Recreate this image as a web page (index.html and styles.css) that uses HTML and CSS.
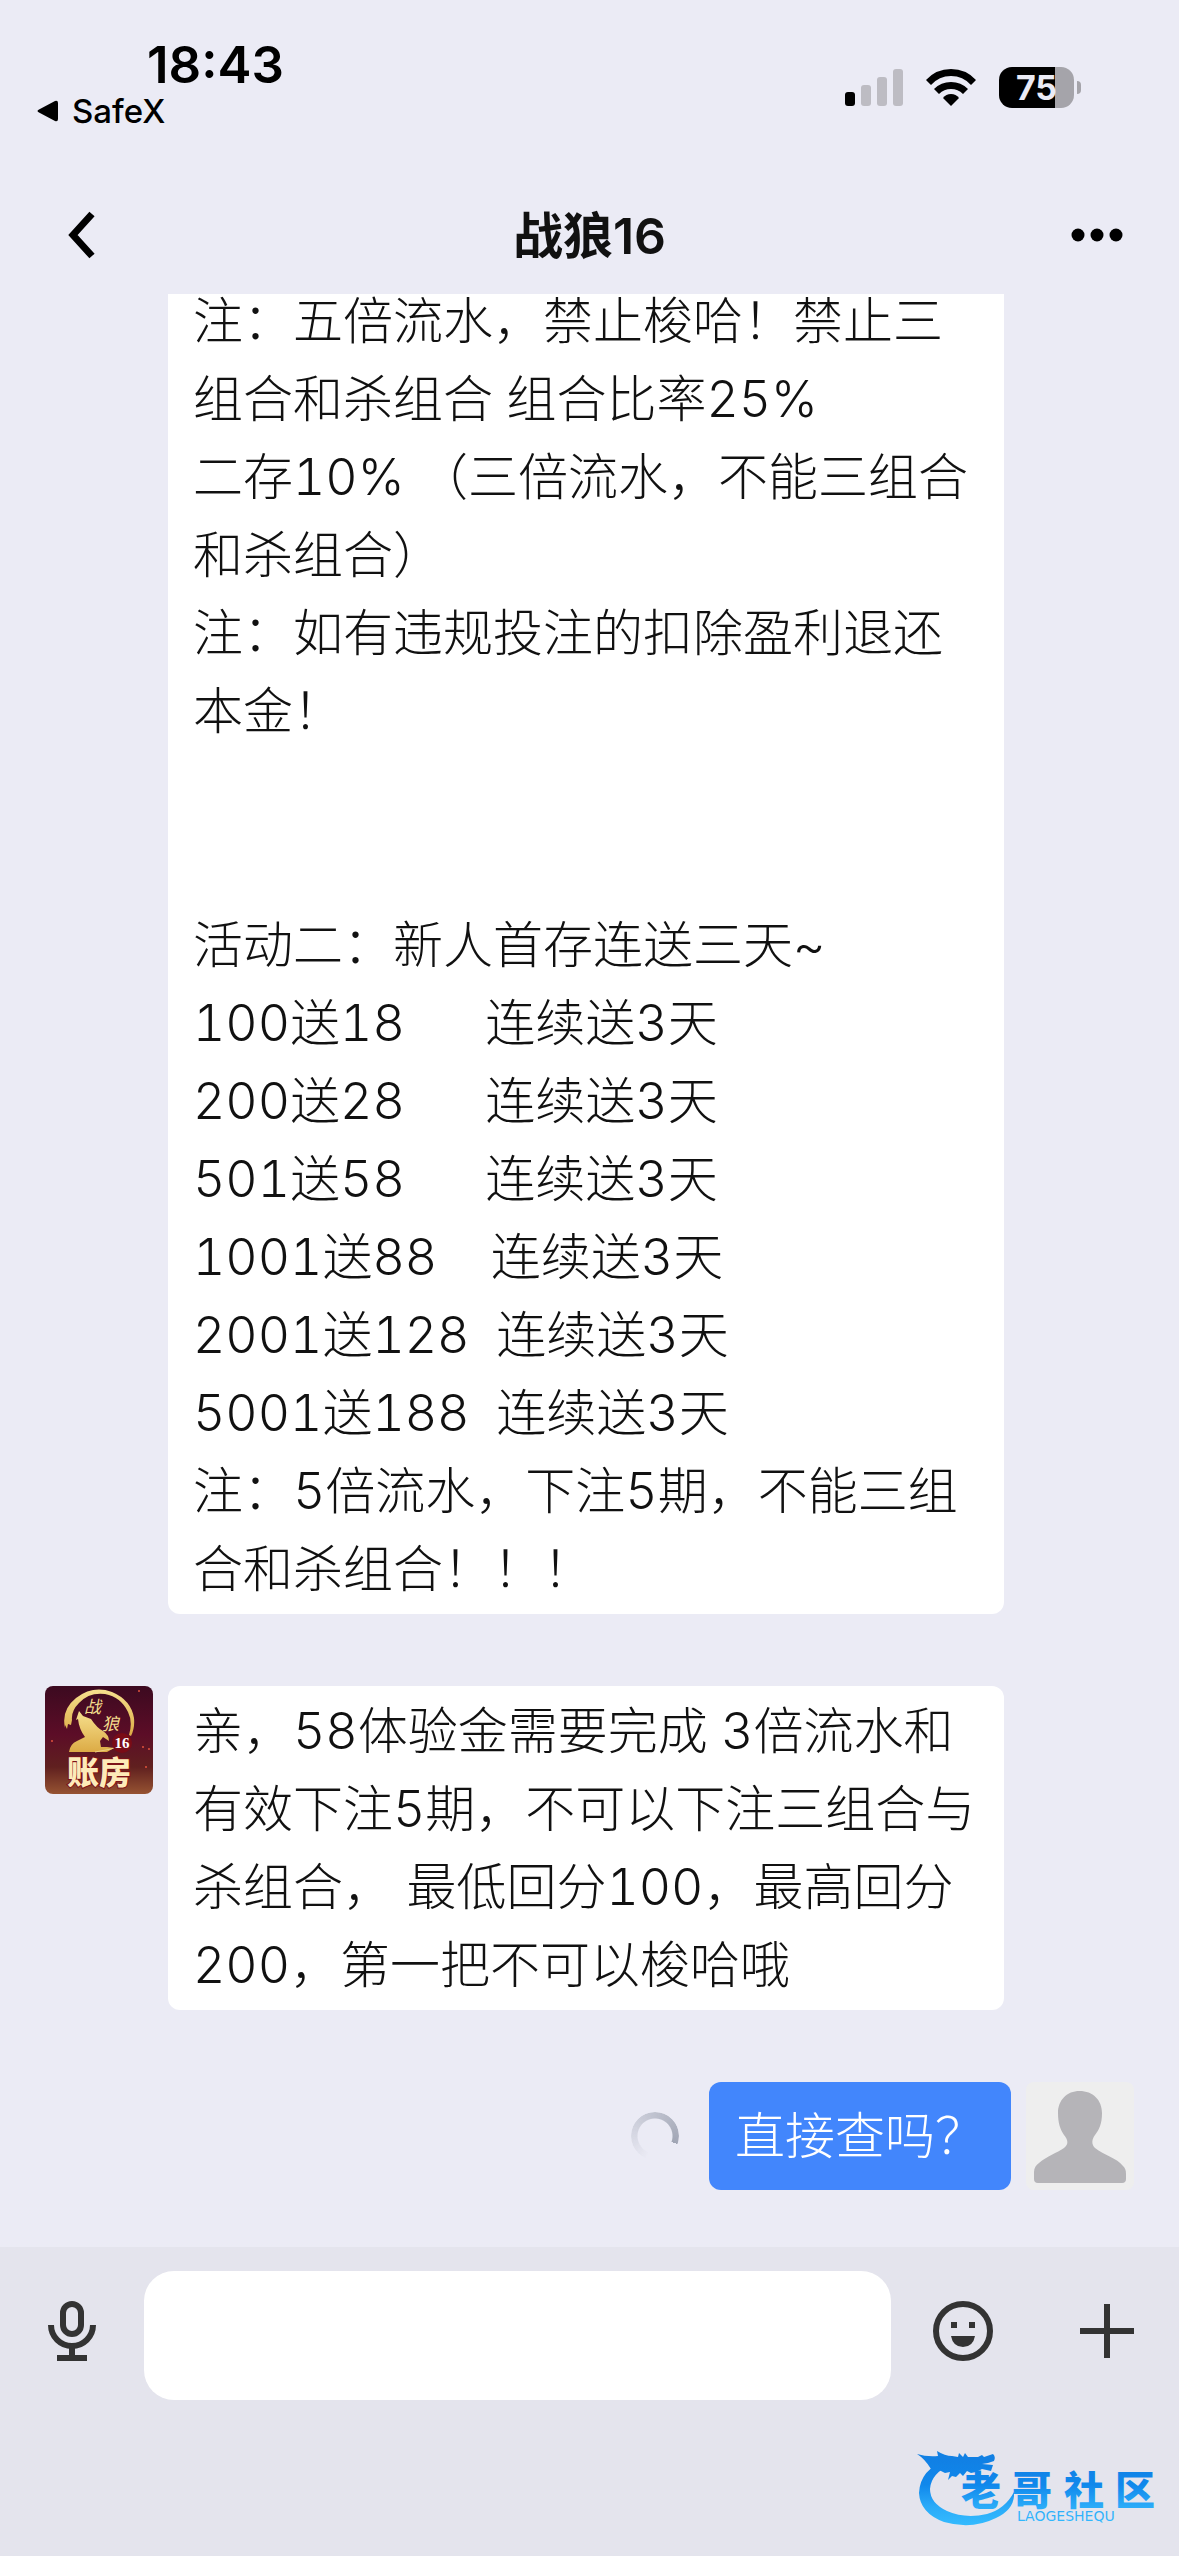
FILE: index.html
```html
<!DOCTYPE html>
<html lang="zh-CN">
<head>
    <meta charset="UTF-8">
    <meta name="viewport" content="width=device-width, initial-scale=1.0">
    <title>战狼16</title>
    <link rel="stylesheet" href="styles.css">
</head>
<body>

    <!-- Status bar -->
    <div class="status-bar">
        <div class="status-left">
            <time class="clock">18:43</time>
            <a class="back-app" href="#">
                <svg width="24" height="24" viewBox="0 0 24 24"><path d="M3 10.500 19 2q3-1 3 2v16q0 3-3 2L3 13.500Q0 12 3 10.500z"/></svg>
                SafeX
            </a>
        </div>
        <div class="status-right">
            <svg width="58" height="38" viewBox="0 0 58 38">
                <rect x="0" y="24" width="10" height="14" rx="3"/>
                <g fill="#bdbcc3">
                    <rect x="16" y="17" width="10" height="21" rx="3"/>
                    <rect x="32" y="9" width="10" height="29" rx="3"/>
                    <rect x="48" y="1" width="10" height="37" rx="3"/>
                </g>
            </svg>
            <svg width="52" height="38" viewBox="0 0 52 38">
                <path d="M1 12Q11 1 26 1t25 11l-5 5Q38 8 26 8T6 17z"/>
                <path d="M9 21q7-7 17-7t17 7l-5 5q-5-5-12-5t-12 5z"/>
                <path d="M18 30q3-4 8-4t8 4l-8 8z"/>
            </svg>
            <div class="battery"><span>75</span></div>
        </div>
    </div>

    <!-- Title bar -->
    <header class="title-bar">
        <button class="icon-btn" type="button" aria-label="返回">
            <svg width="30" height="48" viewBox="1 0 30 48" fill="none" stroke="#000" stroke-width="7"><path d="M26 3 7 24l19 21"/></svg>
        </button>
        <h1>战狼16</h1>
        <button class="icon-btn" type="button" aria-label="更多">
            <svg width="52" height="14" viewBox="0 0 52 14"><circle cx="7" cy="7" r="6.500"/><circle cx="26" cy="7" r="6.500"/><circle cx="45" cy="7" r="6.500"/></svg>
        </button>
    </header>

    <!-- Messages -->
    <main class="chat">
        <div class="message message-in">
            <div class="avatar"></div>
            <div class="bubble">
                注：五倍流水，禁止梭哈！禁止三<br>
                组合和杀组合 组合比率25%<br>
                二存10% （三倍流水，不能三组合<br>
                和杀组合）<br>
                注：如有违规投注的扣除盈利退还<br>
                本金！<br>
                <br>
                <br>
                活动二：新人首存连送三天~<br>
                100送18&nbsp;&nbsp;&nbsp;&nbsp;&nbsp;&nbsp;连续送3天<br>
                200送28&nbsp;&nbsp;&nbsp;&nbsp;&nbsp;&nbsp;连续送3天<br>
                501送58&nbsp;&nbsp;&nbsp;&nbsp;&nbsp;&nbsp;连续送3天<br>
                1001送88&nbsp;&nbsp;&nbsp;&nbsp;连续送3天<br>
                2001送128&nbsp;&nbsp;连续送3天<br>
                5001送188&nbsp;&nbsp;连续送3天<br>
                注：5倍流水，下注5期，不能三组<br>
                合和杀组合！！！
            </div>
        </div>

        <div class="message message-in">
            <svg class="avatar" viewBox="0 0 108 108">
                <defs>
                    <linearGradient id="wine" x1="0" y1="0" x2="0" y2="1">
                        <stop offset="0" stop-color="#3c0a20"/>
                        <stop offset=".45" stop-color="#5c0d27"/>
                        <stop offset=".75" stop-color="#60201f"/>
                        <stop offset="1" stop-color="#965332"/>
                    </linearGradient>
                    <linearGradient id="gold" x1="0" y1="0" x2="0" y2="1">
                        <stop offset="0" stop-color="#f6e08e"/>
                        <stop offset="1" stop-color="#dcab45"/>
                    </linearGradient>
                </defs>
                <rect width="108" height="108" fill="url(#wine)"/>
                <path fill="url(#gold)" d="M20 42Q16 24 31 12 48-1 67 6q19 8 22 26 1 10-3 18l-2-1q4-13-1-23-7-15-23-18-16-2-26 9-8 8-7 17l-1 5-3-1-1 5-2-4z"/>
                <path fill="url(#gold)" d="m31 34 3-9 4 5 8 3q6 9 12 12 6 4 6 10l-6-4-3 4 1 6h6l7 1-7 4H24q1-8 8-11l8-4q-6-8-7-18z"/>
                <path stroke="#ecd183" fill="none" d="m50 66 16-3 5-2"/>
                <text class="brush" x="39" y="27">战</text>
                <text class="brush" x="57" y="44">狼</text>
                <circle cx="77" cy="57" r="10" fill="#7a0c16"/>
                <text class="badge-number" x="77" y="62">16</text>
                <text class="avatar-title" x="54" y="98">账房</text>
                <g fill="#e0523c">
                    <circle cx="98" cy="61" r="1"/><circle cx="104" cy="63" r="1"/><circle cx="7" cy="55" r="1"/><circle cx="94" cy="5" r="1"/><circle cx="101" cy="81" r="1"/>
                </g>
            </svg>
            <div class="bubble">
                亲，58体验金需要完成 3倍流水和<br>
                有效下注5期，不可以下注三组合与<br>
                杀组合， 最低回分100，最高回分<br>
                200，第一把不可以梭哈哦
            </div>
        </div>

        <div class="message message-out">
            <div class="spinner"></div>
            <div class="bubble">直接查吗？</div>
            <svg class="avatar" viewBox="0 0 108 108">
                <rect width="108" height="108" fill="#eeeeee"/>
                <path fill="#b5b4b8" d="M53.500 9C67 9 76 18 76 31c0 11-3 17-7 22-3 4-4 9 0 13 9 7 22 10 28 18 2 2 3 4 3 8v5q0 4-4 4H12q-4 0-4-4v-7c0-4 2-7 5-9 8-7 18-10 25-15 5-4 4-8 0-13-4-6-6-12-6-22C32 18 41 9 53.500 9z"/>
            </svg>
        </div>
    </main>

    <!-- Input bar -->
    <footer class="input-bar">
        <button class="tool-btn" type="button" aria-label="语音">
            <svg width="48" height="60" viewBox="0 0 48 60" fill="none" stroke="#333" stroke-width="6">
                <rect x="15" y="3" width="18" height="30" rx="9"/>
                <path d="M3 24a21 21 0 0 0 42 0M24 45v12M9 57h30"/>
            </svg>
        </button>
        <input class="text-input" type="text" aria-label="输入消息">
        <button class="tool-btn" type="button" aria-label="表情">
            <svg width="60" height="60" viewBox="0 0 60 60" fill="#333">
                <circle cx="30" cy="30" r="27" fill="none" stroke="#333" stroke-width="6"/>
                <path d="M18 21h6v6h-6zM36 21h6v6h-6zM18 35h24q-2 11-12 11T18 35z"/>
            </svg>
        </button>
        <button class="tool-btn" type="button" aria-label="添加">
            <svg width="54" height="54" viewBox="0 0 54 54" stroke="#333" stroke-width="6"><path d="M27 0v54M0 27h54"/></svg>
        </button>
    </footer>

    <svg class="watermark" width="250" height="90" viewBox="0 0 250 90">
        <defs>
            <linearGradient id="sky" gradientUnits="userSpaceOnUse" x1="0" y1="0" x2="0" y2="84">
                <stop offset=".2" stop-color="#1180e4"/>
                <stop offset=".5" stop-color="#1088ec"/>
                <stop offset=".75" stop-color="#2aaaf8"/>
                <stop offset="1" stop-color="#35bcff"/>
            </linearGradient>
        </defs>
        <g fill="url(#sky)">
            <path d="M31 16Q3 26 2 50q1 20 25 29 28 8 52-4 17-8 18-22v-4q-9 17-27 22-22 5-40-3Q13 60 13 46q1-16 22-25z"/>
            <path d="M0 11q10 3 21 2l-1-5q8 5 15 5l6 1 1-4 4 4 2-4 3 4h10l4-2 2 2 9-3q3 3 1 7l-6 2-6 1 11 1-2 6-9-2-6 3-5 1-4-2-4 5-3-3-4 4-4-1-4 4 2-8-5 1-6-3-8-1Q8 16 0 11z"/>
            <text class="logo-text" x="44 95 147 198" y="62">老哥社区</text>
            <text class="logo-latin" x="100" y="78">LAOGESHEQU</text>
        </g>
    </svg>

</body>
</html>
```

FILE: styles.css
```css
* {
    box-sizing: border-box;
}

body {
    margin: 0;
    height: 100vh;
    display: flex;
    flex-direction: column;
    background-color: #ebebf5;
    color: #111;
    font-family: Inter, "Noto Sans CJK SC", sans-serif;
}

button {
    display: flex;
    align-items: center;
    justify-content: center;
    padding: 0;
    border: none;
    background: none;
    cursor: pointer;
}

/* Status bar */
.status-bar {
    display: flex;
    justify-content: space-between;
    height: 176px;
    padding: 35px 105px 0 36px;
    color: #000;
}

.status-left {
    display: flex;
    flex-direction: column;
}

.clock {
    padding-left: 111px;
    font-size: 51px;
    font-weight: 600;
    line-height: 60px;
}

.back-app {
    display: flex;
    align-items: center;
    gap: 12px;
    color: #000;
    font-size: 33px;
    font-weight: 500;
    line-height: 32px;
    text-decoration: none;
}

.status-right {
    display: flex;
    align-items: center;
    gap: 22px;
    height: 104px;
}

.battery {
    position: relative;
    width: 75px;
    height: 41px;
    border-radius: 13px;
    background: linear-gradient(to right, #000 75%, #a5a4aa 75%);
    color: #ebebf5;
    font-size: 34px;
    font-weight: 700;
    line-height: 41px;
    text-align: center;
}

.battery::after {
    content: "";
    position: absolute;
    right: -7px;
    top: 14px;
    width: 4px;
    height: 13px;
    border-radius: 0 4px 4px 0;
    background-color: #a5a4aa;
}

/* Title bar */
.title-bar {
    display: flex;
    align-items: center;
    justify-content: space-between;
    height: 118px;
    padding: 0 32px;
}

.title-bar h1 {
    margin: 0;
    padding-bottom: 6px;
    font-size: 50px;
    font-weight: 600;
}

.icon-btn {
    width: 100px;
    height: 100px;
}

/* Messages */
.chat {
    flex: 1;
    min-height: 0;
    display: flex;
    flex-direction: column;
    justify-content: flex-end;
    gap: 72px;
    padding: 0 45px 57px;
    overflow: hidden;
}

.message {
    display: flex;
    gap: 15px;
}

.message-in {
    padding-right: 130px;
}

.message-out {
    align-items: center;
    justify-content: flex-end;
}

.avatar {
    flex: none;
    width: 108px;
    height: 108px;
    border-radius: 8px;
}

.bubble {
    min-height: 108px;
    padding: 6px 25px;
    border-radius: 12px;
    background-color: #fff;
    font-size: 50px;
    font-weight: 300;
    font-variant-numeric: tabular-nums;
    line-height: 78px;
    white-space: nowrap;
}

.message-in .bubble {
    flex: 1;
}

.message-out .bubble {
    padding: 15px 26px;
    background-color: #4286fc;
    color: #fff;
}

.spinner {
    width: 48px;
    height: 48px;
    margin-right: 15px;
    border-radius: 50%;
    background: conic-gradient(from 200deg, transparent, #a0a5b4 270deg, transparent 270deg);
    mask: radial-gradient(circle, transparent 17px, #000 18px);
}

/* Drawn text inside the group avatar */
.brush {
    fill: #f3dc8c;
    font-family: "Noto Sans CJK SC", sans-serif;
    font-size: 17px;
    font-style: italic;
}

.badge-number {
    fill: #fff;
    font-family: "Liberation Serif", serif;
    font-size: 15px;
    font-weight: 700;
    text-anchor: middle;
}

.avatar-title {
    fill: #fdebb9;
    stroke: #7c1219;
    stroke-width: 2px;
    paint-order: stroke;
    font-family: "Noto Sans CJK SC", sans-serif;
    font-size: 32px;
    font-weight: 900;
    text-anchor: middle;
}

/* Input bar */
.input-bar {
    display: flex;
    height: 309px;
    padding-top: 24px;
    background-color: #e4e4ed;
}

.text-input {
    flex: 1;
    min-width: 0;
    height: 129px;
    padding: 0 30px;
    border: none;
    border-radius: 30px;
    background-color: #fff;
    font: inherit;
    font-size: 50px;
}

.tool-btn {
    width: 144px;
    height: 120px;
}

/* Logo over the page corner */
.watermark {
    position: absolute;
    right: 12px;
    bottom: 23px;
}

.logo-text {
    font-family: "Noto Sans CJK SC", sans-serif;
    font-size: 40px;
    font-weight: 900;
}

.logo-latin {
    font-family: "DejaVu Sans", sans-serif;
    font-size: 14px;
}
```
